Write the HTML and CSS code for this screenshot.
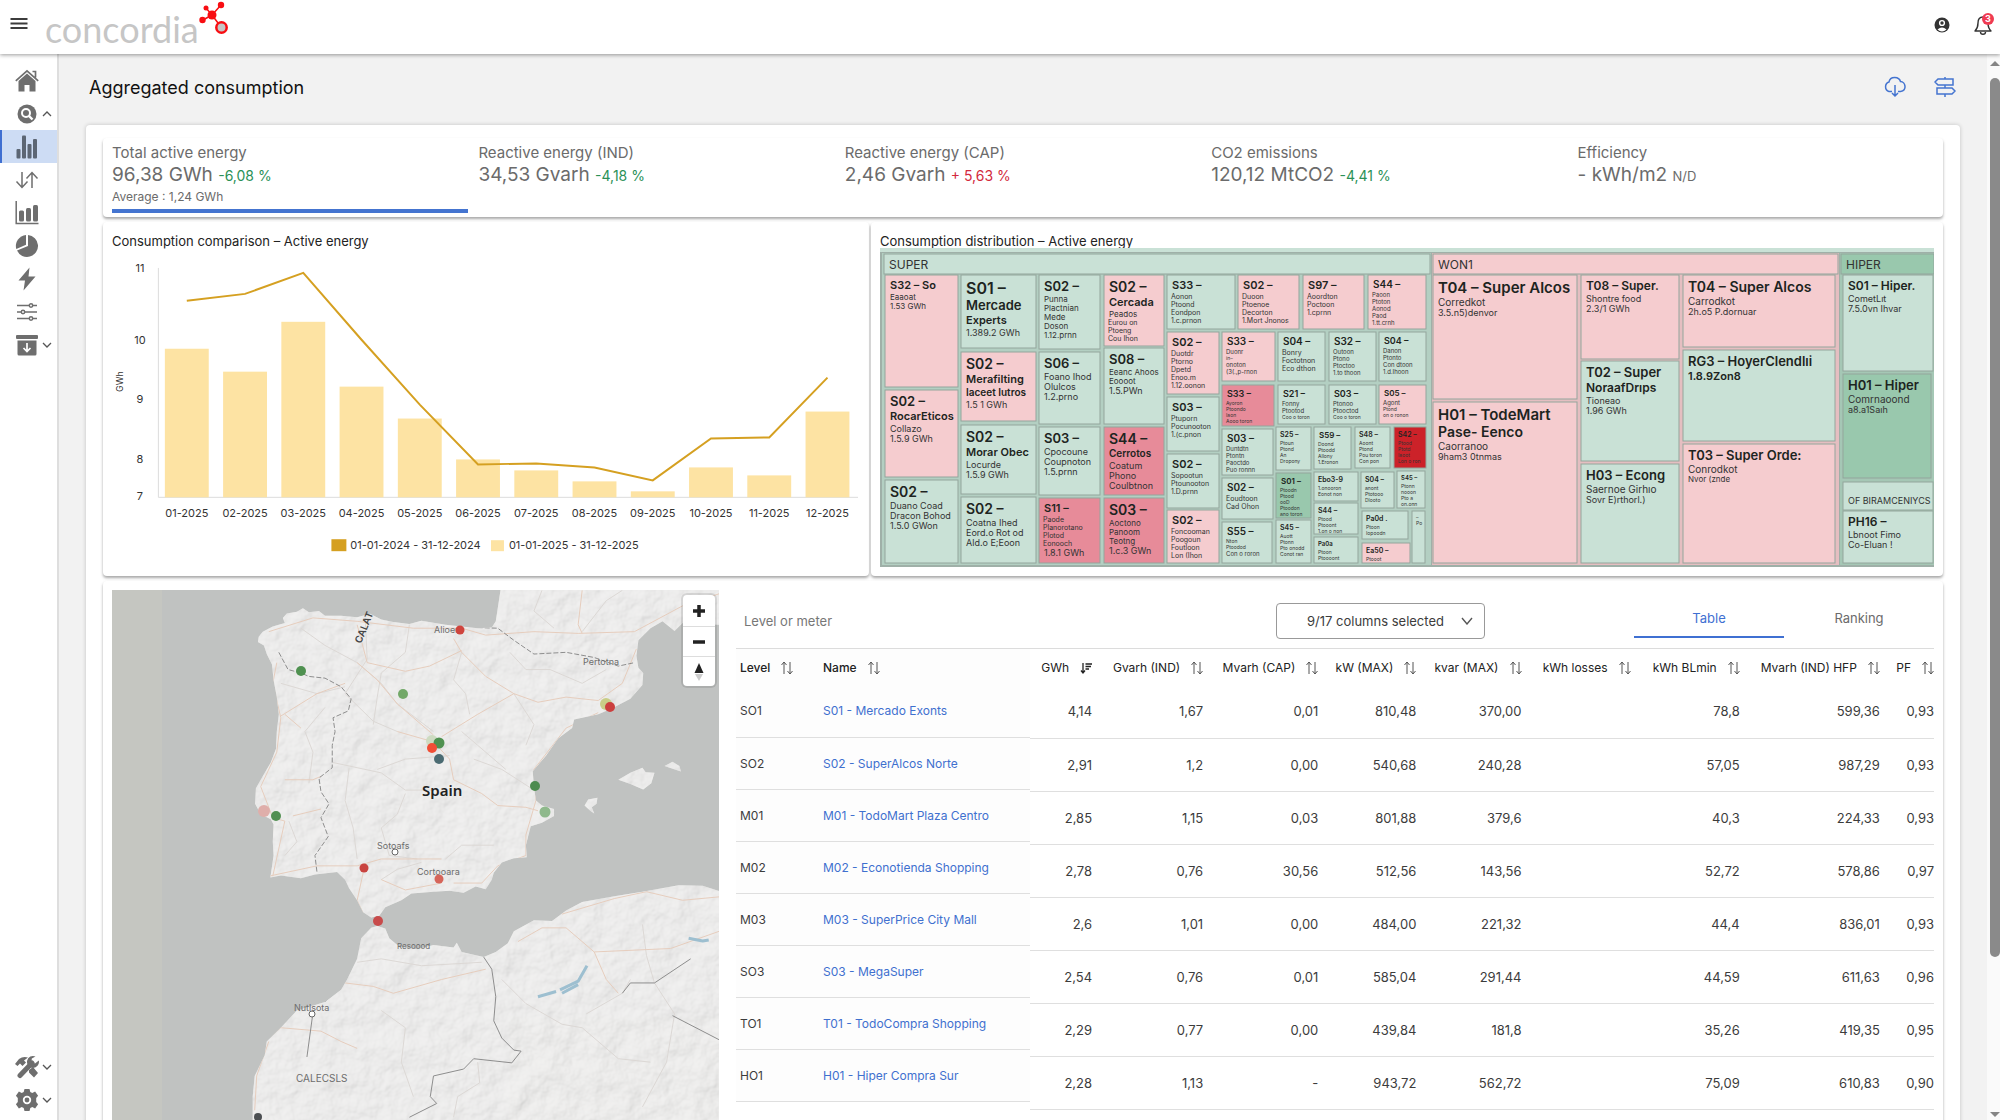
FILE: index.html
```
<!DOCTYPE html>
<html lang="en">
<head>
    <meta charset="UTF-8">
    <meta name="viewport" content="width=device-width, initial-scale=1.0">
    <title>Concordia - Aggregated consumption</title>
    <link rel="stylesheet" href="styles.css">
</head>
<body>
    <header class="topbar">
        <button class="icon-btn burger" aria-label="Menu">
            <svg width="18" height="16" viewBox="0 0 18 16" stroke="#3c3c3c" stroke-width="2"><path d="M0.500 2h17M0.500 6.500h17M0.500 11h17"/></svg>
        </button>
        <a class="logo" href="#">
            <span class="logo-text">concordia</span>
            <svg class="logo-mark" width="32" height="36" viewBox="0 0 32 36">
                <path d="M13 15L7 8M13 15l9-10M13 15l-9 5M13 15l9 12" stroke="#f80d12" stroke-width="1.500"/>
                <g fill="#f80d12"><circle cx="13" cy="15" r="4.500"/><circle cx="7" cy="8" r="2.500"/><circle cx="22" cy="5" r="3.200"/><circle cx="3.500" cy="20" r="3.200"/></g>
                <circle cx="22.500" cy="27.500" r="5.200" fill="#c6c6c6" stroke="#f80d12" stroke-width="2.500"/>
            </svg>
        </a>
        <div class="top-actions">
            <button class="icon-btn" aria-label="Account">
                <svg width="16" height="16" viewBox="0 0 16 16"><circle cx="8" cy="8" r="7.500" fill="#333"/><circle cx="8" cy="6" r="2.400" fill="none" stroke="#fff" stroke-width="1.400"/><path d="M3.500 12.500q4.500-4 9 0q-4.500 4-9 0" fill="#fff"/></svg>
            </button>
            <button class="icon-btn bell" aria-label="Notifications">
                <svg width="18" height="22" viewBox="0 0 18 22" fill="none" stroke="#333" stroke-width="1.400" stroke-linejoin="round"><path d="M9 3C5 3 4 6 4 9c0 4-1 6-3 8h16c-2-2-3-4-3-8 0-3-1-6-5-6zM6.500 18c0 3 5 3 5 0"/></svg>
                <span class="badge">3</span>
            </button>
        </div>
    </header>

    <div class="layout">
        <nav class="sidebar">
            <div class="nav-group">
                <a class="nav-item" href="#" aria-label="Home">
                    <svg viewBox="0 0 24 24"><path d="M12 4.500L3.500 12v10.500h6V16h5v6.500h6V12z"/><path d="M.8 11.800L12 1.800l11.200 10M17.500 2.500h3v6" fill="none" stroke="#6e6e6e" stroke-width="1.700"/></svg>
                </a>
                <a class="nav-item" href="#" aria-label="Search">
                    <svg viewBox="0 0 24 24"><circle cx="12" cy="12" r="9.500"/><circle cx="11" cy="11" r="4" fill="none" stroke="#fff" stroke-width="2"/><path d="M14 14l3.500 3.500" stroke="#fff" stroke-width="2.400"/></svg>
                    <svg class="chev" viewBox="0 0 10 6"><path d="M1 5l4-4 4 4"/></svg>
                </a>
                <a class="nav-item active" href="#" aria-label="Aggregated consumption">
                    <svg viewBox="0 0 24 24"><rect x="1.500" y="14" width="4" height="9.500" rx="1"/><rect x="7" y="0.500" width="4" height="23" rx="1"/><rect x="12.500" y="9" width="4" height="14.500" rx="1"/><rect x="18" y="4" width="4" height="19.500" rx="1"/></svg>
                </a>
                <a class="nav-item" href="#" aria-label="Compare">
                    <svg viewBox="0 0 24 24" class="line"><path d="M7 4v15M1.500 13.500L7 19.500l5.500-6M17 20V5M11.500 10.500L17 4.500l5.500 6"/></svg>
                </a>
                <a class="nav-item" href="#" aria-label="Charts">
                    <svg viewBox="0 0 24 24"><path d="M1.200 0v22.500H23.500" fill="none" stroke="#6e6e6e" stroke-width="1.500"/><rect x="4" y="9.500" width="5" height="11" rx="1.500"/><rect x="11" y="7" width="5" height="13.500" rx="1.500"/><rect x="18" y="4" width="5" height="16.500" rx="1.500"/></svg>
                </a>
                <a class="nav-item" href="#" aria-label="Distribution">
                    <svg viewBox="0 0 24 24"><path d="M13 1a11 11 0 1 1-11 15.500L13 12z"/><path d="M11 1v9.800L1.300 15A11 11 0 0 1 11 1z"/></svg>
                </a>
                <a class="nav-item" href="#" aria-label="Power">
                    <svg viewBox="0 0 24 24"><path d="M14.500 0.500L3.500 13.500h6.500L8.500 23.500l12-14h-7z"/></svg>
                </a>
                <a class="nav-item" href="#" aria-label="Settings">
                    <svg viewBox="0 0 24 24" class="line"><path d="M2 5.500h12M18 5.500h4M2 12h4M10 12h12M2 18.500h12M18 18.500h4"/><circle cx="16" cy="5.500" r="1.700"/><circle cx="8" cy="12" r="1.700"/><circle cx="16" cy="18.500" r="1.700"/></svg>
                </a>
                <a class="nav-item" href="#" aria-label="Archive">
                    <svg viewBox="0 0 24 24"><rect x="1" y="2" width="22" height="4" rx="1"/><path d="M2.500 7.500h19V21q0 1.500-1.500 1.500H4Q2.500 22.500 2.500 21z"/><path d="M12 10v8M8.500 15l3.500 3.500 3.500-3.500" fill="none" stroke="#fff" stroke-width="1.700"/></svg>
                    <svg class="chev" viewBox="0 0 10 6"><path d="M1 1l4 4 4-4"/></svg>
                </a>
            </div>
            <div class="nav-group">
                <a class="nav-item" href="#" aria-label="Tools">
                    <svg viewBox="0 0 24 24"><path d="M0 9l4-5q4-3 9-1.500L9 5.500l2 2-3.500 3.500L5 8.500 2.500 11zM14 15l4-3 5 6-4 4.500-5-5z"/><path d="M5 20.500L17 8" stroke="#6e6e6e" stroke-width="5" stroke-linecap="round"/><path d="M20.500 1.500a6 6 0 1 0 3.300 4L20 8.500 16.500 7l.3-3.500z"/></svg>
                    <svg class="chev" viewBox="0 0 10 6"><path d="M1 1l4 4 4-4"/></svg>
                </a>
                <a class="nav-item" href="#" aria-label="Configuration">
                    <svg viewBox="0 0 24 24"><path d="M9.500 1h5l.8 3 2 1 2.800-1.500 3 4.200-1.900 2.300v4l1.900 2.300-3 4.200L17.300 19l-2 1-.8 3h-5l-.8-3-2-1-2.800 1.500-3-4.200L2.800 14v-4L.9 7.700l3-4.200L6.700 5l2-1z"/><circle cx="12" cy="12" r="3.300" fill="none" stroke="#fff" stroke-width="1.800"/></svg>
                    <svg class="chev" viewBox="0 0 10 6"><path d="M1 1l4 4 4-4"/></svg>
                </a>
            </div>
        </nav>

        <main class="content">
            <div class="title-row">
                <h1>Aggregated consumption</h1>
                <div class="title-actions">
                    <button class="icon-btn" aria-label="Download">
                        <svg width="24" height="22" viewBox="0 0 24 22" fill="none" stroke="#4474d0" stroke-width="1.500"><path d="M9 15.500H6a5 5 0 0 1 0-9.500C7 0 16 0 17.500 5.500c5 0 7 9 0 10H15M12 9v11M9 17l3 3 3-3"/></svg>
                    </button>
                    <button class="icon-btn" aria-label="Signpost">
                        <svg width="22" height="22" viewBox="0 0 22 22" fill="none" stroke="#4474d0" stroke-width="1.500"><path d="M11 1v2M11 9v3M11 18v3M4 3h15v6H4L1 6zM3 12h15l3 3-3 3H3z"/></svg>
                    </button>
                </div>
            </div>

            <div class="board">
                <section class="panel kpis">
                    <div class="kpi selected">
                        <div class="kpi-label">Total active energy</div>
                        <div class="kpi-value">96,38 GWh <small class="down">-6,08 %</small></div>
                        <div class="kpi-note">Average : 1,24 GWh</div>
                    </div>
                    <div class="kpi">
                        <div class="kpi-label">Reactive energy (IND)</div>
                        <div class="kpi-value">34,53 Gvarh <small class="down">-4,18 %</small></div>
                    </div>
                    <div class="kpi">
                        <div class="kpi-label">Reactive energy (CAP)</div>
                        <div class="kpi-value">2,46 Gvarh <small class="up">+ 5,63 %</small></div>
                    </div>
                    <div class="kpi">
                        <div class="kpi-label">CO2 emissions</div>
                        <div class="kpi-value">120,12 MtCO2 <small class="down">-4,41 %</small></div>
                    </div>
                    <div class="kpi">
                        <div class="kpi-label">Efficiency</div>
                        <div class="kpi-value">- kWh/m2 <small class="nd">N/D</small></div>
                    </div>
                </section>

                <div class="charts">
                    <section class="panel chart-panel">
                        <h2>Consumption comparison – Active energy</h2>
                        <svg id="comparison" class="chart" viewBox="0 0 750 310"></svg>
                    </section>
                    <section class="panel tree-panel">
                        <h2>Consumption distribution – Active energy</h2>
                        <svg id="treemap" class="chart" viewBox="0 0 1054 319"></svg>
                    </section>
                </div>

                <section class="panel detail">
                    <div class="map">
                        <svg viewBox="0 0 607 620">
                            <defs>
                                <clipPath id="land">
                                    <path transform="translate(-12 -10) scale(.4018 .3444)" d="M998 20L985 120 975 138 940 140 900 135 860 130 800 118 770 128 730 122 700 115 672 98 640 108 600 104 560 104 545 90 520 94 505 82 490 92 465 97 455 110 460 125 430 135 405 150 395 165 393 180 408 190 415 215 428 245 432 290 440 340 445 390 440 440 438 490 425 530 405 570 388 605 386 650 400 680 425 695 432 710 430 760 432 800 424 864 450 858 500 866 535 855 590 848 610 870 620 895 640 930 655 965 675 980 695 975 710 950 750 930 775 910 830 905 870 902 905 908 935 890 960 898 975 870 980 850 1000 820 1030 808 1062 805 1060 770 1072 715 1100 705 1130 685 1130 665 1100 655 1085 640 1080 600 1077 555 1110 510 1140 460 1175 430 1180 405 1240 390 1270 375 1320 345 1350 305 1352 270 1340 255 1335 220 1340 175 1370 140 1400 120 1430 148 1450 125 1545 130 1545 20z
                                    M690 1005L675 1010 650 1040 640 1100 615 1160 600 1190 560 1225 490 1250 450 1300 415 1340 410 1380 385 1440 380 1500 380 1840 1545 1840 1545 905 1500 888 1440 886 1350 905 1280 918 1200 935 1160 960 1125 990 1080 988 1030 1020 1015 1055 985 1080 955 1095 900 1080 888 1053 880 1067 830 1060 790 1072 745 1065 720 1040 710 1012z
                                    M1290 580L1320 560 1350 545 1358 558 1380 560 1372 590 1352 608 1320 592zM1405 540L1425 528 1442 540 1446 556 1425 548zM1206 655L1215 637 1238 632 1236 650 1224 660 1230 678 1220 670z"/>
                                </clipPath>
                                <filter id="relief" x="0" y="0" width="100%" height="100%">
                                    <feTurbulence type="fractalNoise" baseFrequency=".04" numOctaves="4" seed="8"/>
                                    <feDiffuseLighting surfaceScale="3" diffuseConstant="1.050" lighting-color="#f0efee"><feDistantLight azimuth="225" elevation="65"/></feDiffuseLighting>
                                </filter>
                            </defs>
                            <rect width="607" height="620" fill="#c0c2c1"/>
                            <rect width="50" height="620" fill="#c5c6c1"/>
                            <g clip-path="url(#land)">
                                <rect width="607" height="620" fill="#ededec"/>
                                <rect class="relief" width="607" height="620" filter="url(#relief)"/>
                                <g class="geo" transform="translate(-12 -10) scale(.4018 .3444)">
                                    <path class="minor" d="M500 140L560 190 640 240 700 300 740 360 830 440M660 110L665 230 610 330 680 410 740 440M450 300L540 330 610 310M770 130L760 210 700 270 690 340 680 420M900 210L880 290 910 330 920 390M560 370L510 440 530 500 520 590M620 545L610 640 630 720 640 810M760 620L740 680 700 720 720 800 790 810M830 610L760 610 700 560 620 540 580 530M870 510L760 520 690 550M1010 550L940 480 900 440M1080 610L1000 550 930 520M1030 330L1080 420 1060 480M1100 30L1080 90 1130 140M1200 150L1260 60 1300 30M1020 210L1060 260 1120 260 1200 300 1260 260M800 820L740 840 700 870M980 770L900 770 860 810M470 700L490 760 460 800M640 1110L700 1100 800 1120 950 1110M700 1250L760 1300 750 1400 780 1500M1000 1160L1060 1230 1150 1290 1200 1300 1290 1390 1370 1400M1210 1260L1300 1200 1320 1160M1380 1170L1430 1260 1410 1400 1350 1530M940 1400L945 1460 890 1500 880 1560M1350 1000L1360 1090 1380 1170"/>
                                    <path class="road" d="M420 150L530 110 640 120 780 140 900 140 960 160 1080 150 1190 155 1330 150 1450 75 1541 40M1200 30L1190 130 1200 155M440 240L430 300 450 400 440 500 400 600 430 690 460 700 430 860M880 170L900 210 960 280 1030 330 1090 355 1160 340 1240 350 1300 300 1335 200M900 205L820 250 760 265 665 240 640 130M830 450L740 360 690 290 640 240M850 455L940 390 1030 330M740 440L830 470 870 520 880 580 950 620 990 655 1060 660 1090 670M1240 385L1160 430 1080 550 1085 640 1060 740 1060 800 990 830 950 880 880 880M460 580L530 580 550 570M480 685L550 665M420 860L540 830 640 830 700 810 850 810M655 850L640 930 660 980M700 870L760 900 850 880M500 430L460 390M450 395L540 330 610 300M610 1170L680 1180 730 1200 850 1160 960 1130M410 1340L450 1300 550 1310 600 1340 640 1360M1040 1050L1100 1010 1160 1010 1230 1080 1420 1070 1541 1020M1230 1080L1260 1160 1290 1200M1150 970L1280 925 1360 905 1450 930 1541 920M420 1340L390 1440 385 1540"/>
                                    <path class="border" d="M445 210L468 260 500 270 520 280 560 285 600 310 625 345 618 380 580 400 585 440 578 480 578 545 545 575 550 615 570 650 550 690 568 745 535 800 540 848M940 138L990 140 1030 175 1080 215 1160 210 1230 225 1290 250 1330 240"/>
                                    <path class="border solid" d="M955 1095L975 1130 985 1210 980 1280 1000 1330 1030 1365 1048 1368 1025 1402 930 1390 905 1420 830 1440 822 1500 838 1520 770 1560M600 1180L560 1225M529 1265L515 1385M1425 1265L1541 1335M1300 1200L1320 1170 1380 1170 1470 1100"/>
                                    <path class="lake" d="M1090 1210L1135 1195M1145 1190L1190 1165 1212 1120M1150 1200L1190 1175M1465 1040L1500 1048 1515 1045"/>
                                </g>
                            </g>
                            <g class="map-text">
                                <text x="310" y="206" class="country">Spain</text>
                                <text x="322" y="43">Alioen</text>
                                <text x="471" y="75">Pertotna</text>
                                <text x="265" y="259">Sotoafs</text>
                                <text x="305" y="285">Cortooara</text>
                                <text x="285" y="359" font-size="8">Resoood</text>
                                <text x="182" y="421">Nutlsota</text>
                                <text x="184" y="492" class="region">CALECSLS</text>
                                <text class="coast" transform="translate(249 54) rotate(-68)">CALAT</text>
                            </g>
                            <g fill="#fff" stroke="#666"><circle cx="283" cy="262" r="3"/><circle cx="200" cy="424" r="3"/></g>
                            <g>
                                <circle cx="348" cy="40" r="4.500" fill="#cf443d"/>
                                <circle cx="189" cy="81" r="5" fill="#4f9150"/>
                                <circle cx="291" cy="104" r="5" fill="#72a868"/>
                                <circle cx="494" cy="114" r="6" fill="#c9cd87"/>
                                <circle cx="498" cy="117" r="5" fill="#cb3f3e"/>
                                <circle cx="320" cy="151" r="6" fill="#cddbc1"/>
                                <circle cx="327" cy="153" r="5.500" fill="#4f9150"/>
                                <circle cx="320" cy="158" r="5" fill="#f14e35"/>
                                <circle cx="327" cy="169" r="5" fill="#4b6b72"/>
                                <circle cx="423" cy="196" r="5" fill="#4d8b50"/>
                                <circle cx="433" cy="222" r="5.500" fill="#8fb98c"/>
                                <circle cx="152" cy="221" r="6" fill="#dfaeaa"/>
                                <circle cx="164" cy="226" r="5" fill="#528f52"/>
                                <circle cx="252" cy="278" r="4.500" fill="#c9433f"/>
                                <circle cx="327" cy="289" r="4.500" fill="#d6655a"/>
                                <circle cx="266" cy="331" r="5" fill="#c84b4b"/>
                                <circle cx="146" cy="527" r="4" fill="#4c4f52"/>
                            </g>
                        </svg>
                        <div class="map-controls">
                            <button aria-label="Zoom in"><svg width="14" height="14" viewBox="0 0 14 14"><path d="M7 1v12M1 7h12" stroke="#222" stroke-width="3.500"/></svg></button>
                            <button aria-label="Zoom out"><svg width="14" height="14" viewBox="0 0 14 14"><path d="M1 7h12" stroke="#222" stroke-width="3.500"/></svg></button>
                            <button aria-label="Reset north"><svg width="10" height="18" viewBox="0 0 10 18"><path d="M5 0l4.500 10h-9z" fill="#222"/><path d="M1 11h8l-4 7z" fill="#ccc"/></svg></button>
                        </div>
                    </div>

                    <div class="data">
                        <div class="toolbar">
                            <input type="text" class="filter" placeholder="Level or meter" aria-label="Level or meter">
                            <div class="select-wrap">
                                <select aria-label="Columns"><option>9/17 columns selected</option></select>
                                <svg width="12" height="8" viewBox="0 0 12 8" fill="none" stroke="#555" stroke-width="1.400"><path d="M1 1l5 6 5-6"/></svg>
                            </div>
                            <div class="tabs" role="tablist">
                                <button role="tab" class="tab active" aria-selected="true">Table</button>
                                <button role="tab" class="tab" aria-selected="false">Ranking</button>
                            </div>
                        </div>
                        <div class="tables">
                            <table class="frozen" id="frozen">
                                <colgroup><col class="c-level"><col class="c-name"></colgroup>
                                <thead><tr></tr></thead>
                                <tbody></tbody>
                            </table>
                            <table class="values" id="values">
                                <colgroup><col class="c1"><col class="c2"><col class="c3"><col class="c4"><col class="c5"><col class="c6"><col class="c7"><col class="c8"><col class="c9"></colgroup>
                                <thead><tr></tr></thead>
                                <tbody></tbody>
                            </table>
                        </div>
                    </div>
                </section>
            </div>
        </main>

        <div class="scrollbar" aria-hidden="true">
            <span class="arrow-up"></span>
            <span class="track"><span class="thumb"></span></span>
            <span class="arrow-down"></span>
        </div>
    </div>

    <script src="script.js"></script>
</body>
</html>
```

FILE: styles.css
```
* {
    box-sizing: border-box;
}
body {
    display: flex;
    flex-direction: column;
    height: 100vh;
    margin: 0;
    overflow: hidden;
    font-family: Inter, "Open Sans", sans-serif;
    font-size: 13px;
    color: #3c3c3c;
    background-color: #f2f2f2;
}
a {
    color: inherit;
    text-decoration: none;
}
button, input, select {
    font: inherit;
    color: inherit;
}
.icon-btn {
    display: flex;
    padding: 0;
    border: none;
    background: none;
    cursor: pointer;
}

/* Top bar */
.topbar {
    position: relative;
    z-index: 2;
    display: flex;
    flex: none;
    align-items: center;
    height: 54px;
    padding: 0 8px 4px 10px;
    background-color: #fff;
    box-shadow: 0 1px 4px rgba(0, 0, 0, 0.4);
}
.logo {
    display: flex;
    height: 50px;
    margin-left: 17px;
}
.logo-text {
    font-family: Lato, sans-serif;
    font-size: 36px;
    line-height: 58px;
    color: #c6c6c6;
}
.top-actions {
    display: flex;
    gap: 24px;
    align-items: center;
    margin-left: auto;
}
.bell {
    position: relative;
}
.badge {
    position: absolute;
    top: -1px;
    right: -2px;
    width: 12px;
    height: 12px;
    border-radius: 50%;
    font-size: 9px;
    font-weight: 700;
    line-height: 12px;
    text-align: center;
    color: #fff;
    background-color: #ef3b52;
}

/* Sidebar */
.layout {
    display: flex;
    flex: 1;
    min-height: 0;
}
.sidebar {
    display: flex;
    flex: none;
    flex-direction: column;
    justify-content: space-between;
    width: 59px;
    padding: 10px 0 4px;
    border-right: 2px solid #dedede;
    background-color: #fff;
}
.nav-item {
    display: flex;
    gap: 3px;
    align-items: center;
    height: 33px;
    padding-left: 15px;
}
.nav-item svg {
    width: 24px;
    height: 24px;
    fill: #6e6e6e;
}
.nav-item svg.line {
    fill: none;
    stroke: #6e6e6e;
    stroke-width: 1.5;
}
.nav-item svg.chev {
    width: 10px;
    height: 6px;
    fill: none;
    stroke: #555;
    stroke-width: 1.3;
}
.nav-item.active {
    padding-left: 13px;
    border-left: 2px solid #3f6fd1;
    background-color: #cddcf4;
}
.nav-item.active svg {
    fill: #5c6674;
}

/* Content */
.content {
    flex: 1;
    min-width: 0;
    padding: 0 27px;
    overflow: hidden;
}
.title-row {
    display: flex;
    align-items: center;
    justify-content: space-between;
    height: 71px;
    padding: 0 4px 5px 3px;
}
h1 {
    margin: 0;
    font-size: 18px;
    font-weight: 400;
    color: #111;
}
.title-actions {
    display: flex;
    gap: 27px;
}
.board {
    display: flex;
    flex-direction: column;
    gap: 5px;
    padding: 13px 17px;
    border-radius: 4px;
    background-color: #fff;
    box-shadow: 0 0 4px rgba(0, 0, 0, 0.2);
}
.panel {
    border-radius: 4px;
    background-color: #fff;
    box-shadow: 0 2px 3px rgba(0, 0, 0, 0.35);
}
.kpis {
    display: grid;
    grid-template-columns: repeat(5, 1fr);
    gap: 10px;
    height: 79px;
    padding: 5px 9px 4px;
    color: #6b6b6b;
}
.kpi.selected {
    border-bottom: 4px solid #4474d0;
}
.kpi-label {
    font-size: 15px;
    line-height: 20px;
}
.kpi-value {
    font-size: 19px;
    line-height: 23px;
}
.kpi-value small {
    font-size: 14px;
}
.kpi-value .nd {
    font-size: 13px;
}
.kpi-note {
    font-size: 12px;
    line-height: 20px;
}
.down {
    color: #2b9157;
}
.up {
    color: #d3293d;
}
.charts {
    display: grid;
    grid-template-columns: 766fr 1072fr;
    gap: 2px;
}
.chart-panel, .tree-panel {
    height: 354px;
    padding: 12px 9px 0;
}
h2 {
    margin: 0;
    font-size: 13px;
    font-weight: 400;
    line-height: 14px;
    color: #222;
}
.chart {
    display: block;
    width: 100%;
}
.chart text {
    fill: #333;
}
#comparison text {
    font-size: 11px;
    text-anchor: middle;
}
#comparison text.unit {
    font-size: 9px;
}
#comparison text.legend {
    text-anchor: start;
}
#treemap .strong {
    font-weight: 600;
    fill: #1d2421;
}

/* Map and table */
.detail {
    display: grid;
    grid-template-columns: 607fr 1198fr;
    gap: 17px;
    height: 620px;
    padding: 9px 9px 0;
}
.map {
    position: relative;
    min-width: 0;
    overflow: hidden;
}
.map > svg {
    display: block;
    width: 100%;
}
.relief {
    opacity: 0.5;
}
.geo path {
    fill: none;
    vector-effect: non-scaling-stroke;
    stroke-linejoin: round;
}
.geo .minor {
    stroke: #dcd8d5;
}
.geo .road {
    stroke: #e6cdbd;
}
.geo .border {
    stroke: #8d8d8d;
    stroke-dasharray: 5 2;
}
.geo .solid {
    stroke-dasharray: none;
}
.geo .lake {
    stroke: #9dbfd0;
    stroke-width: 3;
}
.map-text {
    font-size: 9px;
    fill: #6d6d6d;
}
.map-text .country {
    font-family: "Noto Sans", sans-serif;
    font-size: 15px;
    font-weight: 600;
    fill: #222;
}
.map-text .region, .map-text .coast {
    font-size: 10px;
}
.map-text .coast {
    font-weight: 600;
    fill: #444;
}
.map-controls {
    position: absolute;
    top: 5px;
    right: 4px;
    display: flex;
    flex-direction: column;
    width: 32px;
    border-radius: 4px;
    background-color: #fff;
    box-shadow: 0 0 0 2px rgba(0, 0, 0, 0.1);
}
.map-controls button {
    display: flex;
    align-items: center;
    justify-content: center;
    height: 31px;
    padding: 0;
    border: none;
    background: none;
}
.map-controls button + button {
    height: 30px;
    border-top: 1px solid #ddd;
}
.toolbar {
    display: flex;
    align-items: center;
    height: 59px;
    padding-top: 4px;
    border-bottom: 1px solid #dcdcdc;
}
.filter {
    flex: 1;
    min-width: 0;
    height: 35px;
    padding: 0 8px;
    border: none;
    outline: none;
    background: none;
}
.filter::placeholder {
    color: #777;
}
.select-wrap {
    position: relative;
    width: 209px;
    margin-right: 149px;
}
.select-wrap select {
    width: 100%;
    height: 36px;
    padding: 0 40px 0 30px;
    border: 1px solid #999;
    border-radius: 4px;
    background-color: #fff;
    appearance: none;
}
.select-wrap svg {
    position: absolute;
    top: 14px;
    right: 12px;
    pointer-events: none;
}
.tabs {
    display: flex;
    align-self: flex-start;
}
.tab {
    width: 150px;
    height: 44px;
    padding: 6px 0 0;
    border: none;
    border-bottom: 2px solid transparent;
    color: #6b6b6b;
    background: none;
}
.tab.active {
    border-color: #3f70d2;
    color: #3f70d2;
}
.tables {
    display: flex;
    align-items: flex-start;
}
table {
    table-layout: fixed;
    border-collapse: collapse;
}
.frozen {
    flex: none;
    width: 294px;
    background-color: #fdfdfd;
}
.values {
    flex: 1;
    width: 0;
}
.c-level { width: 83px; }
.c-name { width: 211px; }
.c1 { width: 62px; }
.c2 { width: 111px; }
.c3 { width: 115px; }
.c4 { width: 98px; }
.c5 { width: 105px; }
.c6 { width: 109px; }
.c7 { width: 109px; }
.c8 { width: 140px; }
.c9 { width: 54px; }
th {
    height: 36px;
    padding: 0;
    font-size: 12px;
    font-weight: 400;
    text-align: right;
    white-space: nowrap;
    color: #222;
}
th svg {
    width: 12px;
    height: 14px;
    margin-left: 11px;
    vertical-align: -3px;
    fill: none;
    stroke: #555;
}
td {
    height: 53px;
    padding: 0;
    border-bottom: 1px solid #dfdfdf;
    text-align: right;
}
.frozen th {
    font-weight: 500;
}
.frozen th, .frozen td {
    padding-left: 4px;
    text-align: left;
}
.frozen td {
    height: 52px;
    font-size: 12px;
}
.frozen a {
    color: #3f70cf;
}

/* Page scrollbar */
.scrollbar {
    display: flex;
    flex: none;
    flex-direction: column;
    align-items: flex-end;
    width: 13px;
    padding: 7px 0 3px;
    background-color: #fafafa;
}
.track {
    flex: 1;
    width: 10px;
    padding: 12px 0;
}
.thumb {
    display: block;
    height: 86%;
    border-radius: 5px;
    background-color: #8a8a8a;
}
.arrow-up, .arrow-down {
    border: 5px solid transparent;
    border-top-width: 0;
    border-bottom: 5px solid #858585;
}
.arrow-down {
    border-top: 5px solid #858585;
    border-bottom-width: 0;
}
```

FILE: script.js
```
const SVG = 'http://www.w3.org/2000/svg';

function add(parent, tag, attrs, text) {
    const el = document.createElementNS(SVG, tag);
    for (const key in attrs) el.setAttribute(key, attrs[key]);
    if (text) el.textContent = text;
    parent.appendChild(el);
    return el;
}

// Comparison chart: bar tops and line points in chart units
const bars = [101, 124, 74, 139, 171, 212, 223, 234, 244, 220, 228, 164];
const line = [53, 46, 25, 92, 157, 217, 216, 220, 233, 191, 190, 130];
const comparison = document.getElementById('comparison');
const base = 250;

[[11, 20], [10, 92], [9, 151], [8, 212], [7, 249]].forEach(([value, y]) => {
    add(comparison, 'text', { x: 28, y: y + 4 }, String(value));
});
add(comparison, 'text', { class: 'unit', transform: 'translate(11 134) rotate(-90)' }, 'GWh');
add(comparison, 'path', { d: `M46.500 20V${base}H748`, fill: 'none', stroke: '#dcdcdc' });
bars.forEach((top, i) => {
    const x = 53 + i * 58.4;
    add(comparison, 'rect', { x: x, y: top, width: 44, height: base - top, fill: '#fde3a3' });
    add(comparison, 'text', { x: x + 22, y: 270 }, String(i + 1).padStart(2, '0') + '-2025');
});
add(comparison, 'polyline', {
    points: line.map((y, i) => `${75 + i * 58.4},${y}`).join(' '),
    fill: 'none', stroke: '#d5a021', 'stroke-width': 2
});
add(comparison, 'rect', { x: 220, y: 292, width: 15, height: 12, fill: '#d5a021' });
add(comparison, 'text', { class: 'legend', x: 239, y: 302 }, '01-01-2024 - 31-12-2024');
add(comparison, 'rect', { x: 380, y: 293, width: 13, height: 11, fill: '#fde3a3' });
add(comparison, 'text', { class: 'legend', x: 398, y: 302 }, '01-01-2025 - 31-12-2025');

// Treemap: [left, top, right, bottom, colour, lines]. A line is "size text", * marks strong text
const colors = { g: '#c9e1d6', p: '#f5cccf', r: '#e78b99', d: '#cc2229', h: '#99c8ad' };
const groups = [
    [2, 5, 551, 317, '#b3cfc2'],
    [552, 5, 959, 317, '#e5bec1'],
    [960, 5, 1054, 317, '#a5c7b5']
];
const tiles = [
    [4, 6, 550, 26, 'g', ['12 SUPER']],
    [553, 6, 958, 26, 'p', ['12 WON1']],
    [961, 6, 1054, 26, 'h', ['12 HIPER']],

    [5, 27, 78, 139, 'p', ['*11 S32 – So', '8 Eaaoat', '8 1.53 GWh']],
    [5, 142, 78, 229, 'p', ['*13 S02 –', '*11 RocarEticos', '9 Collazo', '9 1.5.9 GWh']],
    [5, 232, 78, 315, 'g', ['*14 S02 –', '9 Duano Coad', '9 Dracon Bohod', '9 1.5.0 GWon']],
    [81, 27, 156, 100, 'g', ['*16 S01 –', '*13 Mercade', '*11 Experts', '9 1.389.2 GWh']],
    [81, 104, 156, 173, 'p', ['*14 S02 –', '*11 Merafilting', '*10 Iaceet Iutros', '9 1.5 1 GWh']],
    [81, 177, 156, 246, 'g', ['*14 S02 –', '*11 Morar Obec', '9 Locurde', '9 1.5.9 GWh']],
    [81, 249, 156, 315, 'g', ['*14 S02 –', '9 Coatna Ihed', '9 Eord.o Rot od', '9 Ald.o E;Eoon']],
    [159, 27, 220, 101, 'g', ['*13 S02 –', '8 Punna', '8 Plactnian', '8 Mede', '8 Doson', '8 1.12.prnn']],
    [159, 104, 220, 176, 'g', ['*13 S06 –', '9 Foano Ihod', '9 Olulcos', '9 1.2.prno']],
    [159, 179, 220, 247, 'g', ['*13 S03 –', '9 Cpocoune', '9 Coupnoton', '9 1.5.prnn']],
    [159, 250, 220, 315, 'r', ['*11 S11 –', '7 Paode', '7 Planorotano', '7 Plotod', '7 Eonooch', '9 1.8.1 GWh']],
    [224, 27, 284, 98, 'p', ['*14 S02 –', '*11 Cercada', '8 Peados', '7 Eurou on', '7 Ptoeng', '7 Cou Ihon']],
    [224, 100, 284, 176, 'g', ['*13 S08 –', '8 Eeanc Ahoos', '8 Eoooot', '9 1.5.PWn']],
    [224, 179, 284, 247, 'r', ['*14 S44 –', '*10 Cerrotos', '9 Coatum', '9 Phono', '9 Coulbtnon']],
    [224, 250, 284, 315, 'r', ['*14 S03 –', '8 Aoctono', '8 Panoom', '8 Teotng', '9 1.c.3 GWn']],
    [287, 27, 355, 81, 'g', ['*11 S33 –', '7 Aonon', '7 Ptoond', '7 Eondpon', '7 1.c.prnon']],
    [358, 27, 419, 81, 'p', ['*11 S02 –', '7 Duoon', '7 Ptoenoe', '7 Decorton', '7 1.Mort Jnonos']],
    [423, 27, 484, 81, 'p', ['*11 S97 –', '7 Aoordton', '7 Poctoon', '7 1.cprnn']],
    [488, 27, 546, 81, 'p', ['*10 S44 –', '6 Paoon', '6 Ptoton', '6 Aonod', '6 Paod', '6 1.tt.crnh']],
    [287, 84, 339, 146, 'p', ['*11 S02 –', '7 Duotdr', '7 Ptorno', '7 Dpetd', '7 Enoo.m', '7 1.12.oonon']],
    [287, 149, 339, 203, 'g', ['*11 S03 –', '7 Ptuporn', '7 Pocunooton', '7 1.(c.pnon']],
    [287, 206, 339, 260, 'g', ['*11 S02 –', '7 Sopootun', '7 Ptounooton', '7 1.D.prnn']],
    [287, 262, 339, 315, 'p', ['*11 S02 –', '7 Foncooman', '7 Poogoun', '7 Foutloon', '7 Lon (Ihon']],
    [342, 84, 395, 133, 'p', ['*10 S33 –', '6 Duonr', '5 in–', '6 onoton', '6 (3(.,p-rnon']],
    [398, 84, 445, 133, 'g', ['*10 S04 –', '7 Bonry', '7 Foctotnon', '7 Eco dthon']],
    [449, 84, 496, 133, 'g', ['*10 S32 –', '6 Outoon', '6 Ptono', '6 Ptoctoo', '6 1.to thoon']],
    [499, 84, 546, 133, 'g', ['*9 S04 –', '6 Danon', '6 Ptonto', '6 Con dtoon', '6 1.d.Ihoon']],
    [342, 137, 394, 178, 'r', ['*9 S33 –', '5 Ayoron', '5 Ptoondo', '5 Iaon', '5 Aooo toron']],
    [398, 137, 445, 176, 'g', ['*9 S21 –', '6 Fonny', '6 Ptootod', '5 Coo o toron']],
    [449, 137, 496, 176, 'g', ['*9 S03 –', '6 Ptonoo', '6 Ptooctod', '5 Coo o toron']],
    [499, 137, 546, 176, 'p', ['*8 S05 –', '6 Agont', '5 Ptond', '5 on o ronon']],
    [342, 181, 393, 227, 'g', ['*10 S03 –', '6 Duntdtn', '6 Ptontn', '6 Paoctdo', '6 Puo ronnn']],
    [342, 230, 393, 271, 'g', ['*10 S02 –', '7 Eoudtoon', '7 Cad Ohon']],
    [342, 274, 392, 315, 'g', ['*10 S55 –', '5 Nton', '5 Ptoodod', '6 Con o roron']],
    [396, 179, 431, 222, 'g', ['*7 S25 –', '5 Ptoun', '5 Ptond', '5 An', '5 Dropony']],
    [434, 179, 471, 221, 'g', ['*8 S59 –', '5 Doond', '5 Ptoodd', '5 Allony', '5 1.Eronon']],
    [475, 179, 510, 220, 'g', ['*7 S48 –', '5 Aoont', '5 Ptond', '5 Pou toron', '5 Con pon']],
    [514, 179, 546, 220, 'd', ['*7 S42 –', '5 Ptood', '5 Ptotd', '5 Iaoot', '5 Lon o ron']],
    [396, 225, 431, 270, 'h', ['*8 S01 –', '5 Ptoodn', '5 Ptood', '5 ooD', '5 Ptoodon', '5 ano toron']],
    [396, 272, 431, 315, 'g', ['*7 S45 –', '5 Auott', '5 Ptonn', '5 Pto onodd', '5 Conot ran']],
    [434, 224, 478, 253, 'g', ['*7 Ebo3-9', '5 1.onooron', '5 Eonot non']],
    [434, 255, 478, 286, 'g', ['*7 S44 –', '5 Ptood', '5 Ptooont', '5 1.on o non']],
    [434, 289, 478, 315, 'g', ['*6 Pa0a', '5 Ptoon', '5 Ptoooont']],
    [481, 224, 514, 260, 'g', ['*7 S04 –', '5 anont', '5 Ptotooo', '5 Dlooto']],
    [517, 223, 545, 260, 'g', ['*6 S45 –', '5 Ptonn', '5 nooon', '5 Pto a', '5 on.onn']],
    [482, 263, 528, 291, 'g', ['*7 Pa0d .', '5 Ptoon', '5 Iopoodn']],
    [482, 295, 530, 315, 'p', ['*7 Ea50 –', '5 Ptooot']],
    [532, 263, 545, 315, 'g', ['5 –', '5 Po']],

    [553, 27, 697, 151, 'p', ['*15 T04 – Super Alcos', '10 Corredkot', '9 3.5.n5)denvor']],
    [553, 154, 697, 315, 'p', ['*15 H01 – TodeMart', '*14 Pase- Eenco', '10 Caorranoo', '9 9ham3 0tnmas']],
    [701, 27, 799, 111, 'p', ['*12 T08 – Super.', '9 Shontre food', '9 2.3/1 GWh']],
    [701, 113, 799, 213, 'g', ['*13 T02 – Super', '*12 NoraafDrıps', '9 Tioneao', '9 1.96 GWh']],
    [701, 216, 799, 315, 'g', ['*13 H03 – Econg', '10 Saernoe Girhıo', '9 Sovr E)rthorl.)']],
    [803, 27, 955, 99, 'p', ['*14 T04 – Super Alcos', '10 Carrodkot', '9 2h.o5 P.dornuar']],
    [803, 102, 955, 193, 'g', ['*13 RG3 – HoyerClendlıi', '*11 1.8.9Zon8']],
    [803, 196, 955, 315, 'p', ['*13 T03 – Super Orde:', '10 Conrodkot', '8 Nvor (znde']],
    [963, 27, 1053, 123, 'g', ['*12 S01 – Hiper.', '9 CometLıt', '9 7.5.0vn Ihvar']],
    [963, 126, 1051, 230, 'h', ['*13 H01 – Hiper', '10 Comrnaoond', '9 a8.a1Saıh']],
    [963, 234, 1053, 262, 'g', ['9  ', '9 OF BIRAMCENIYCS']],
    [963, 263, 1053, 315, 'g', ['*12 PH16 –', '9 Lbnoot Fimo', '9 Co-Eluan !']]
];
const treemap = document.getElementById('treemap');

add(treemap, 'rect', { width: 1054, height: 319, fill: '#9fb0a8' });
add(treemap, 'rect', { width: 1054, height: 4, fill: '#c9e1d6' });
groups.forEach(([x1, y1, x2, y2, fill]) => {
    add(treemap, 'rect', { x: x1, y: y1, width: x2 - x1, height: y2 - y1, fill: fill });
});
tiles.forEach(([x1, y1, x2, y2, color, lines]) => {
    add(treemap, 'rect', {
        x: x1, y: y1, width: x2 - x1, height: y2 - y1,
        fill: colors[color], stroke: '#93a59c'
    });
    let y = y1;
    let afterStrong = true;
    lines.forEach(item => {
        const strong = item[0] === '*';
        const size = parseInt(strong ? item.slice(1) : item, 10);
        y += strong ? size + 3 : Math.round(size * 1.1) + (afterStrong ? 2 : 0);
        afterStrong = strong;
        add(treemap, 'text', {
            x: x1 + (size < 8 ? 4 : 5), y: y, 'font-size': size, class: strong ? 'strong' : ''
        }, item.slice(item.indexOf(' ') + 1));
    });
});

// Data table
const sortIcon = '<svg viewBox="0 0 12 14"><path d="M3 13V1M0.500 4L3 1l2.500 3M9 1v12M6.500 10L9 13l2.500-3"/></svg>';
const sortedIcon = '<svg viewBox="0 0 12 14"><path d="M3 2v10M1 9.500L3 12l2-2.500M5.500 3h6.500M5.500 5.500h5.500M5.500 8h3.500" stroke="#222" stroke-width="1.300"/></svg>';
const heads = ['GWh', 'Gvarh (IND)', 'Mvarh (CAP)', 'kW (MAX)', 'kvar (MAX)', 'kWh losses', 'kWh BLmin', 'Mvarh (IND) HFP', 'PF'];
const rows = [
    ['SO1', 'S01 - Mercado Exonts', '4,14', '1,67', '0,01', '810,48', '370,00', '', '78,8', '599,36', '0,93'],
    ['SO2', 'S02 - SuperAlcos Norte', '2,91', '1,2', '0,00', '540,68', '240,28', '', '57,05', '987,29', '0,93'],
    ['M01', 'M01 - TodoMart Plaza Centro', '2,85', '1,15', '0,03', '801,88', '379,6', '', '40,3', '224,33', '0,93'],
    ['M02', 'M02 - Econotienda Shopping', '2,78', '0,76', '30,56', '512,56', '143,56', '', '52,72', '578,86', '0,97'],
    ['M03', 'M03 - SuperPrice City Mall', '2,6', '1,01', '0,00', '484,00', '221,32', '', '44,4', '836,01', '0,93'],
    ['SO3', 'S03 - MegaSuper', '2,54', '0,76', '0,01', '585,04', '291,44', '', '44,59', '611,63', '0,96'],
    ['TO1', 'T01 - TodoCompra Shopping', '2,29', '0,77', '0,00', '439,84', '181,8', '', '35,26', '419,35', '0,95'],
    ['HO1', 'H01 - Hiper Compra Sur', '2,28', '1,13', '-', '943,72', '562,72', '', '75,09', '610,83', '0,90']
];
const frozen = document.getElementById('frozen');
const values = document.getElementById('values');

frozen.tHead.rows[0].innerHTML = ['Level', 'Name'].map(h => `<th>${h}${sortIcon}</th>`).join('');
values.tHead.rows[0].innerHTML = heads.map((h, i) => `<th>${h}${i ? sortIcon : sortedIcon}</th>`).join('');
rows.forEach(row => {
    frozen.tBodies[0].insertRow().innerHTML = `<td>${row[0]}</td><td><a href="#">${row[1]}</a></td>`;
    values.tBodies[0].insertRow().innerHTML = row.slice(2).map(v => `<td>${v}</td>`).join('');
});
```
